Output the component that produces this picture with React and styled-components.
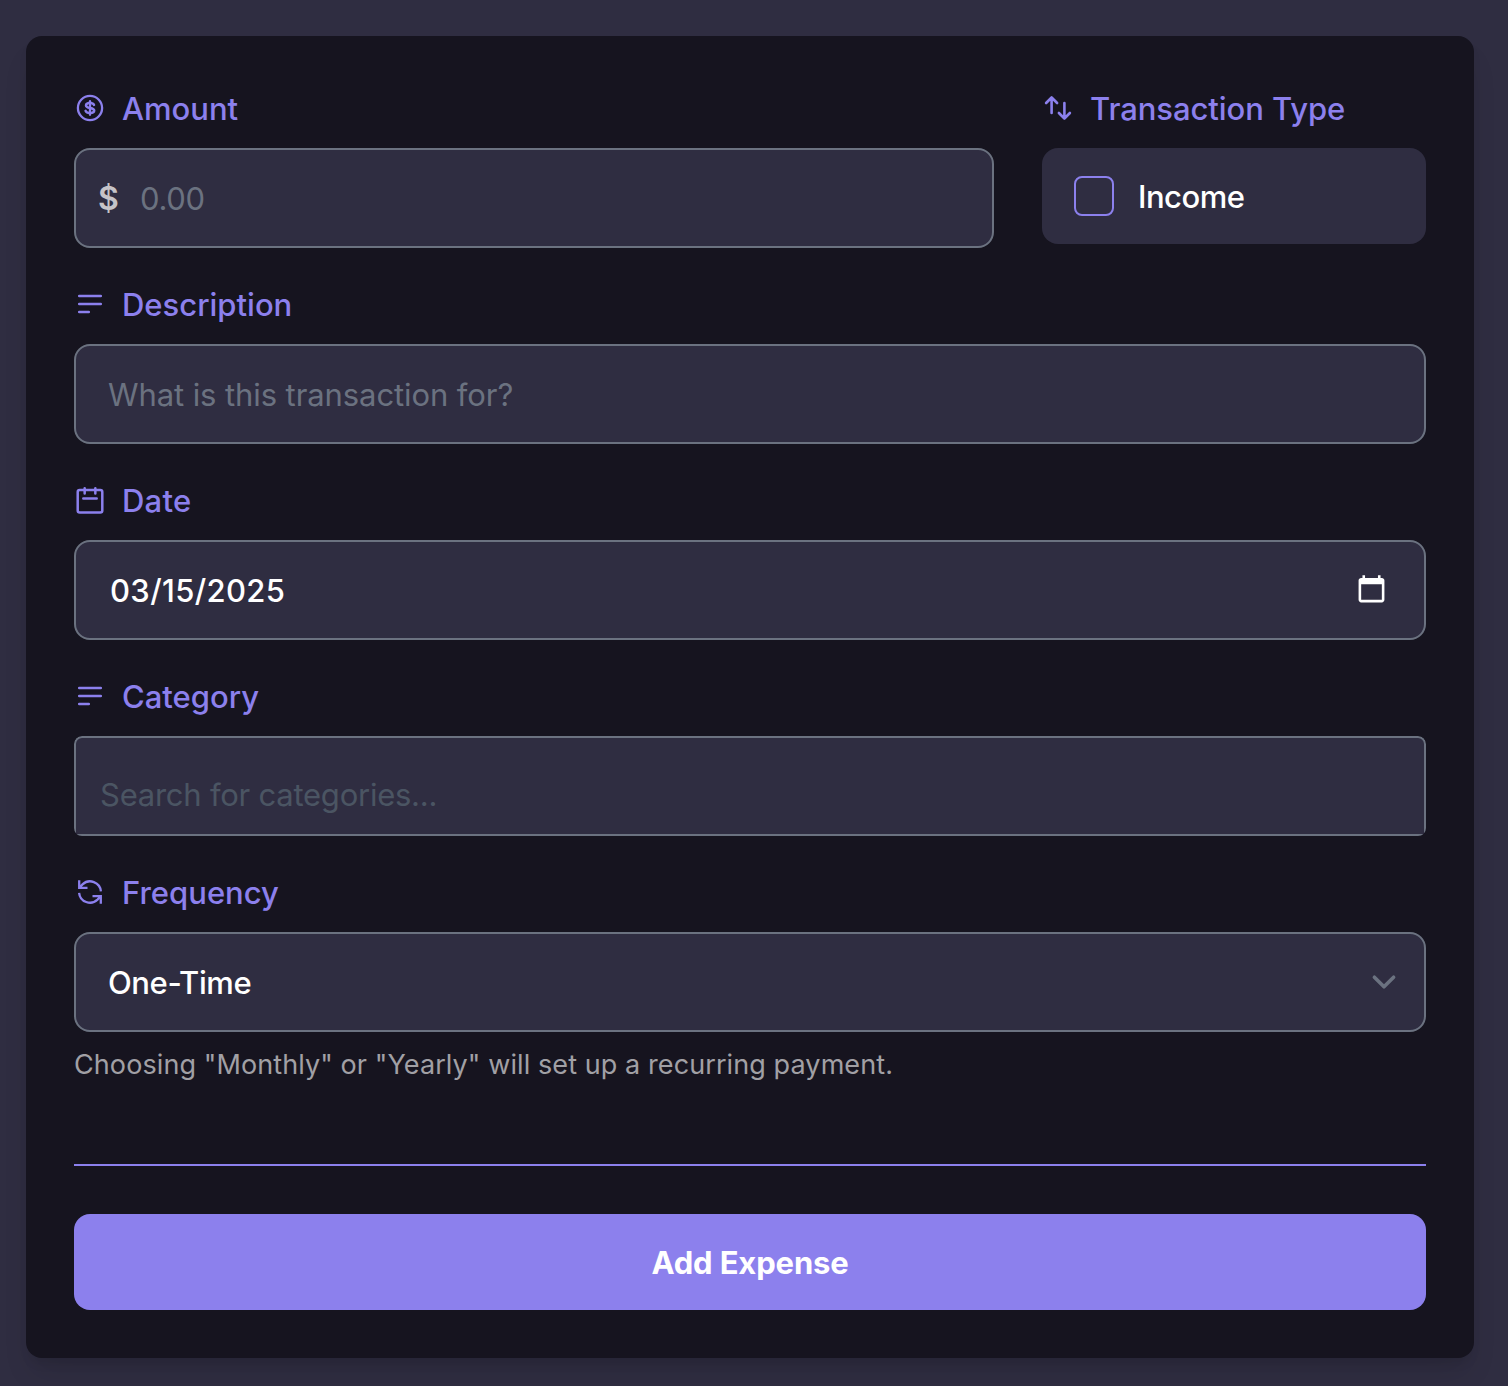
import React from "react";
import styled, { createGlobalStyle } from "styled-components";

const color = {
  page: "#2f2d41",
  card: "#16141f",
  accent: "#8c80ed",
  border: "#6b7280",
};

const GlobalStyle = createGlobalStyle`
  *, *::before, *::after { box-sizing: border-box; }
  body {
    margin: 0;
    background: ${color.page};
    font-family: Inter, "Liberation Sans", sans-serif;
  }
  input { font-family: inherit; }
`;

const Page = styled.main`
  min-height: 1386px;
  padding: 36px 34px 28px 26px;
  overflow: hidden;
`;

const Card = styled.form`
  display: flex;
  flex-direction: column;
  height: 1322px;
  padding: 48px;
  border-radius: 16px;
  background: ${color.card};
  box-shadow: 0 20px 30px -6px rgba(0, 0, 0, 0.1), 0 8px 12px -4px rgba(0, 0, 0, 0.1);
`;

const Fields = styled.div`
  display: flex;
  flex-direction: column;
  gap: 32px;
`;

const TopRow = styled.div`
  display: grid;
  grid-template-columns: 920px 384px;
  column-gap: 48px;
`;

const Field = styled.div`
  display: flex;
  flex-direction: column;
`;

const Label = styled.label`
  display: flex;
  align-items: center;
  gap: 16px;
  height: 48px;
  margin-bottom: 16px;
  color: ${color.accent};
  font-size: 31px;
  font-weight: 500;
  line-height: 48px;
  letter-spacing: ${(p) => p.$spacing || "0"};
  white-space: nowrap;
`;

const LabelText = styled.span`
  padding-top: 2px;
`;

const LabelIcon = styled.svg`
  flex: none;
  width: 32px;
  height: 32px;
  fill: none;
  stroke: currentColor;
  stroke-width: 2.5;
  stroke-linecap: round;
  stroke-linejoin: round;
`;

const Control = styled.div`
  display: flex;
  align-items: center;
  height: 100px;
  padding: 0 ${(p) => p.$right || "32px"} 0 ${(p) => p.$left || "32px"};
  border: 2px solid ${color.border};
  border-radius: 16px;
  background: ${color.page};
`;

const TextInput = styled.input`
  flex: 1;
  min-width: 0;
  height: 48px;
  padding: 0;
  border: 0;
  outline: 0;
  background: transparent;
  color: #fff;
  font-size: 31px;
  letter-spacing: ${(p) => p.$spacing || "0"};
  &::placeholder { color: #6b7280; opacity: 1; }
`;

const Currency = styled.span`
  width: 42px;
  padding-top: 2px;
  color: #c5c3c8;
  font-size: 32px;
  font-weight: 600;
  line-height: 48px;
`;

const Value = styled.span`
  flex: 1;
  padding-top: 2px;
  color: #fff;
  font-size: 31px;
  font-weight: 450;
  line-height: 48px;
  letter-spacing: ${(p) => p.$spacing || "0"};
`;

const PickerIcon = styled.svg`
  width: 31px;
  height: 31px;
  margin-right: 1px;
  margin-top: -1px;
  fill: #fff;
`;

const Chevron = styled.svg`
  width: 48px;
  height: 48px;
  fill: none;
  stroke: ${color.border};
  stroke-width: 1.5;
  stroke-linecap: round;
  stroke-linejoin: round;
`;

const SearchClip = styled.div`
  overflow: hidden;
  border-radius: 8px;
`;

const SearchInput = styled(TextInput)`
  display: block;
  width: 100%;
  height: 100px;
  padding: 16px 24px 0;
  border: 2px solid ${color.border};
  border-radius: 8px 8px 0 0;
  background: ${color.page};
  &::placeholder { color: #4b5563; }
`;

const Toggle = styled.div`
  display: flex;
  align-items: center;
  gap: 24px;
  height: 96px;
  padding: 0 32px;
  border-radius: 16px;
  background: ${color.page};
`;

const Checkbox = styled.span`
  width: 40px;
  height: 40px;
  border: 2px solid ${color.accent};
  border-radius: 8px;
`;

const Help = styled.p`
  margin: 13px 0 0;
  color: #a1a0a5;
  font-size: 27px;
  line-height: 40px;
  letter-spacing: 0.09px;
  white-space: nowrap;
`;

const Footer = styled.div`
  margin-top: auto;
  padding-top: 48px;
  border-top: 2px solid ${color.accent};
`;

const Submit = styled.button`
  display: block;
  width: 100%;
  height: 96px;
  padding: 0;
  border: 0;
  border-radius: 16px;
  background: ${color.accent};
  color: #fff;
  font-family: inherit;
  font-size: 31px;
  font-weight: 700;
  letter-spacing: -0.15px;
`;

const DollarIcon = () => (
  <LabelIcon viewBox="0 0 32 32">
    <circle cx="16" cy="16" r="12.1" strokeWidth="2.3" />
    <path strokeWidth="2.3" d="M16 9.200v13.600" />
    <path strokeWidth="2.5" d="M20 12.900c-.5-1.300-1.900-2-4-2-2.400 0-4 .9-4 2.500 0 3.600 8.200 1.600 8.200 5.200 0 1.600-1.700 2.500-4.200 2.500-2.300 0-3.900-.8-4.400-2.200" />
  </LabelIcon>
);

const SwapIcon = () => (
  <LabelIcon viewBox="0 0 32 32">
    <path strokeWidth="2.600" d="M9.600 20.900V5.600M4.100 11l5.500-5.500 5.500 5.500M22.400 11.100v15.300M16.900 21l5.500 5.500 5.500-5.500" />
  </LabelIcon>
);

const LinesIcon = () => (
  <LabelIcon viewBox="0 0 32 32">
    <path d="M5.200 8h21.600M5.200 16h21.600M5.200 24h9.600" />
  </LabelIcon>
);

const CalendarIcon = () => (
  <LabelIcon viewBox="0 0 32 32">
    <rect x="3.700" y="6" width="24.600" height="22.400" rx="2" />
    <path d="M10.670 4.200v5.200M21.330 4.200v5.200M9.300 14.600h13.400" />
  </LabelIcon>
);

const RefreshIcon = () => (
  <LabelIcon viewBox="0 0 32 32">
    <path strokeLinecap="butt" strokeLinejoin="miter" strokeWidth="2.3" d="M5.200 4.200v7.700h8.300M5.400 11.700L8.500 8.400A10.900 10.900 0 0 1 26.900 15.300M5.100 16.800A10.900 10.900 0 0 0 23.500 23.600L26.600 20.300M26.800 27.800v-7.700h-8.300" />
  </LabelIcon>
);

export default function App() {
  return (
    <>
      <GlobalStyle />
      <Page>
        <Card>
          <Fields>
            <TopRow>
              <Field>
                <Label><DollarIcon /><LabelText>Amount</LabelText></Label>
                <Control $left="22px">
                  <Currency>$</Currency>
                  <TextInput $spacing="-0.3px" placeholder="0.00" />
                </Control>
              </Field>
              <Field>
                <Label $spacing="-0.07px"><SwapIcon /><LabelText>Transaction Type</LabelText></Label>
                <Toggle>
                  <Checkbox />
                  <Value $spacing="-0.5px">Income</Value>
                </Toggle>
              </Field>
            </TopRow>
            <Field>
              <Label><LinesIcon /><LabelText>Description</LabelText></Label>
              <Control>
                <TextInput $spacing="-0.09px" placeholder="What is this transaction for?" />
              </Control>
            </Field>
            <Field>
              <Label $spacing="0.25px"><CalendarIcon /><LabelText>Date</LabelText></Label>
              <Control $right="36px" $left="34px">
                <Value $spacing="0.35px">03/15/2025</Value>
                <PickerIcon viewBox="0 0 24 24">
                  <path d="M20 3h-1V1h-2v2H7V1H5v2H4c-1.100 0-2 .9-2 2v15c0 1.100.9 2 2 2h16c1.100 0 2-.9 2-2V5c0-1.100-.9-2-2-2zm0 17H4V8h16v12z" />
                </PickerIcon>
              </Control>
            </Field>
            <Field>
              <Label><LinesIcon /><LabelText>Category</LabelText></Label>
              <SearchClip>
                <SearchInput $spacing="-0.24px" placeholder="Search for categories..." />
              </SearchClip>
            </Field>
            <Field>
              <Label><RefreshIcon /><LabelText>Frequency</LabelText></Label>
              <Control $right="16px">
                <Value $spacing="-0.4px">One-Time</Value>
                <Chevron viewBox="0 0 20 20">
                  <path d="M6 8l4 4 4-4" />
                </Chevron>
              </Control>
              <Help>Choosing "Monthly" or "Yearly" will set up a recurring payment.</Help>
            </Field>
          </Fields>
          <Footer>
            <Submit type="button">Add Expense</Submit>
          </Footer>
        </Card>
      </Page>
    </>
  );
}
